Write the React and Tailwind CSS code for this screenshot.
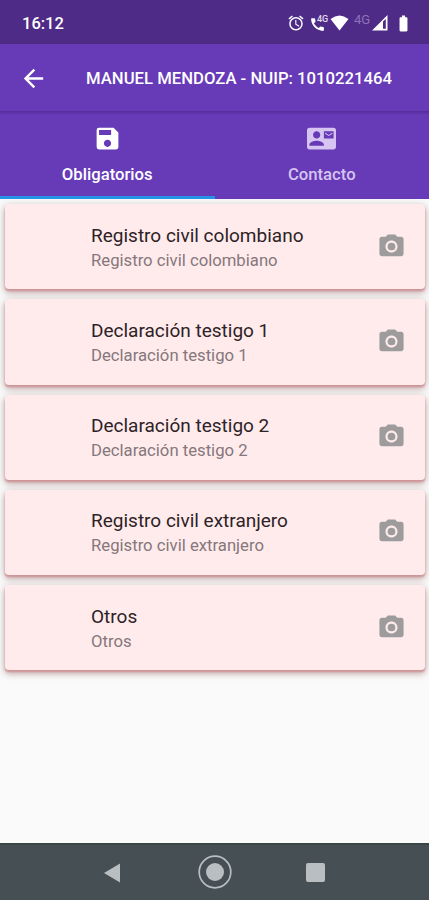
import { MdArrowBack, MdSave, MdContactMail, MdCameraAlt, MdAlarm, MdCall, MdBatteryFull } from "react-icons/md";

const documents = [
  "Registro civil colombiano",
  "Declaración testigo 1",
  "Declaración testigo 2",
  "Registro civil extranjero",
  "Otros",
];

function StatusBar() {
  return (
    <div className="flex h-11 shrink-0 items-center bg-[#4e2b87] pl-[22px] pr-[16px] pt-[2px] text-white">
      <span className="mt-px flex-1 text-[16.5px] font-medium leading-5">16:12</span>
      <MdAlarm className="size-[18px]" />
      <div className="ml-[4px] flex w-[20px] items-start">
        <MdCall className="mt-[3px] size-[17px] shrink-0" />
        <span className="-ml-[9px] mt-px text-[9px] font-medium leading-[10px] text-[#e4daf0]">4G</span>
      </div>
      <svg className="ml-px h-[16px] w-[19px]" viewBox="0 0 19 16" fill="currentColor">
        <path d="M0.5 4Q9.5-3 18.5 4L9.5 15.5Z" />
      </svg>
      <span className="ml-[5px] -mt-[6px] w-[17px] text-[13px] font-normal leading-3 text-[#8d72b6]">4G</span>
      <svg className="ml-px h-[16px] w-[16px]" viewBox="0 0 16 16" fill="currentColor">
        <path fillRule="evenodd" d="M0 15.5L15.5 0V15.5ZM11 6.5V13.8H13.8V4Z" />
      </svg>
      <MdBatteryFull className="ml-[6px] size-[19px]" />
    </div>
  );
}

function DocumentCard({ name }) {
  return (
    <div className="flex h-[85.2px] shrink-0 items-center rounded-[4px] bg-[#ffebec] pl-[86px] pr-[19px] shadow-[0_2px_2px_#cf9498,0_4px_6px_#a87c7c80,0_1px_9px_#8a707040]">
      <div className="flex-1 pt-[2px]">
        <div className="text-[19px] leading-[25px] text-[#2d2226]">{name}</div>
        <div className="text-[16.7px] leading-[25px] text-[#85777b]">{name}</div>
      </div>
      <MdCameraAlt className="mb-px size-[29px] text-[#9d9b9b]" />
    </div>
  );
}

export default function App() {
  return (
    <div className="flex h-[900px] w-[429px] flex-col overflow-hidden bg-[#fafafa] font-['Roboto',sans-serif]">
      <StatusBar />
      <div className="flex h-[67px] shrink-0 items-center bg-[#673ab7] pl-5 pt-px text-white">
        <MdArrowBack className="-ml-px size-[29px]" />
        <h1 className="ml-[38px] mt-px whitespace-nowrap text-[16.7px] font-medium">MANUEL MENDOZA - NUIP: 1010221464</h1>
      </div>
      <div className="relative z-10 flex h-[88px] shrink-0 bg-linear-to-b from-[#532b9b] to-[#673ab7] to-[4px] text-[16.7px] font-medium">
        <div className="flex flex-1 flex-col items-center border-b-[3px] border-[#2693e6] pt-[13px] text-white">
          <MdSave className="size-[29px]" />
          <span className="mt-[10px] leading-6">Obligatorios</span>
        </div>
        <div className="flex flex-1 flex-col items-center pt-[13px] text-[#d5c5f0]">
          <MdContactMail className="size-[29px]" />
          <span className="mt-[10px] leading-6">Contacto</span>
        </div>
      </div>
      <main className="flex flex-1 flex-col gap-[10px] pl-[5px] pr-[4px] pt-[5.3px]">
        {documents.map((name) => (
          <DocumentCard key={name} name={name} />
        ))}
      </main>
      <nav className="flex h-[57px] shrink-0 items-center border-t-2 border-[#3b4546] bg-[#464f54] pl-[103px] text-[#b9bfc0]">
        <svg className="h-5 w-[18px]" viewBox="0 0 18 20" fill="currentColor">
          <path d="M1 10L17 0.5V19.5Z" />
        </svg>
        <svg className="-mt-px ml-[77px] size-[34px]" viewBox="0 0 34 34">
          <circle cx="17" cy="17" r="15.8" fill="none" stroke="currentColor" strokeWidth="1.7" />
          <circle cx="17" cy="17" r="9" fill="currentColor" />
        </svg>
        <div className="ml-[74px] size-[19px] rounded-[2px] bg-[#b9bfc0]" />
      </nav>
    </div>
  );
}
